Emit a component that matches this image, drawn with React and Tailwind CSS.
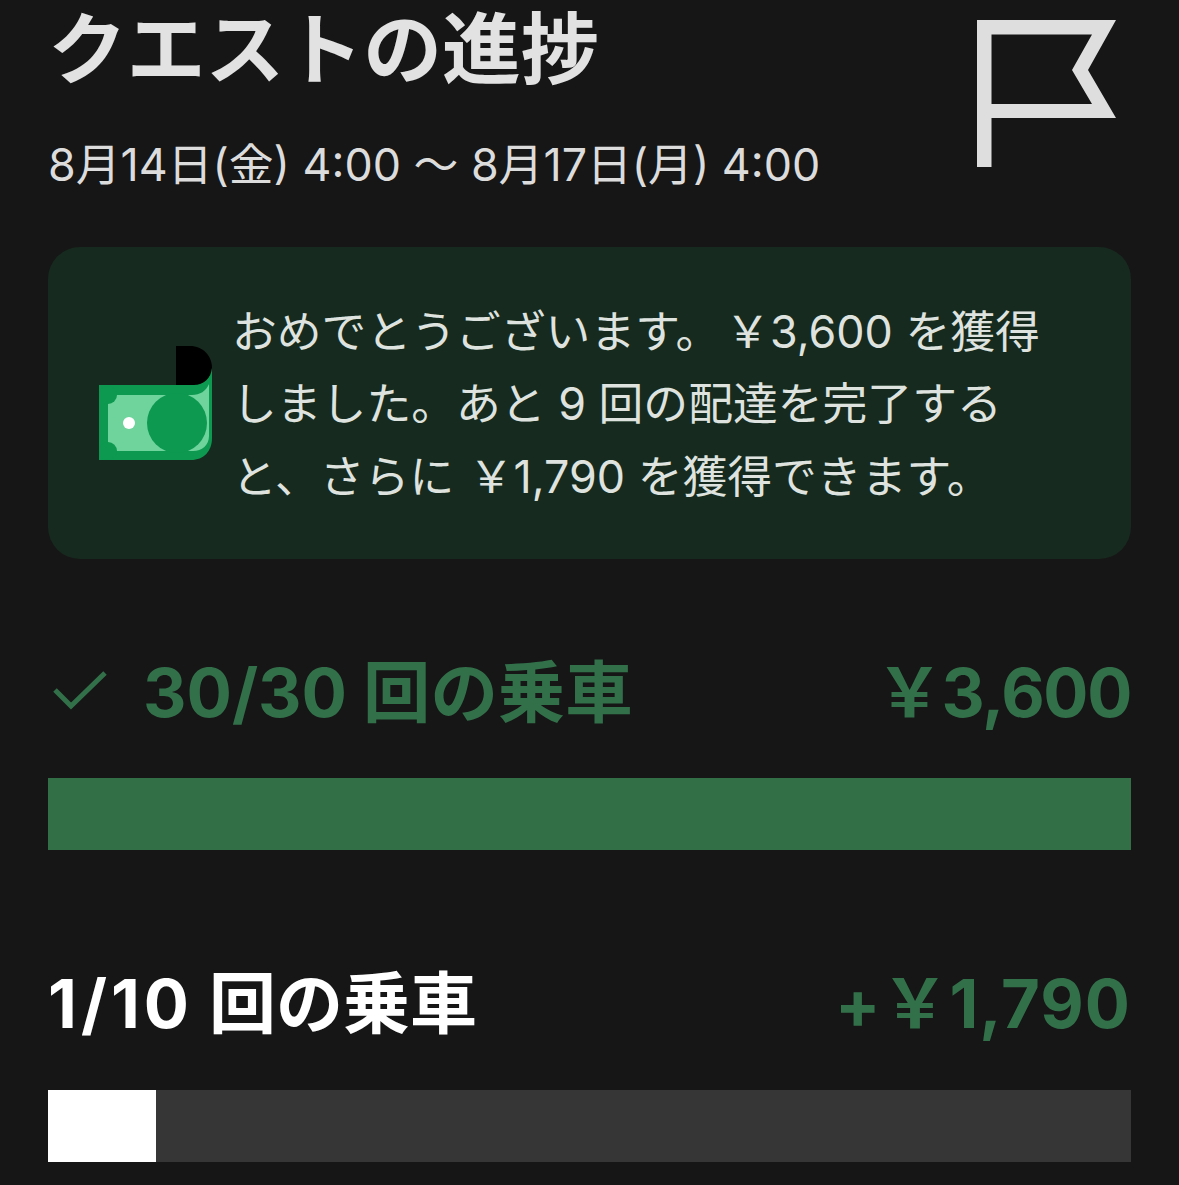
import React from 'react';

const font = { fontFamily: 'Inter, "Noto Sans CJK JP", sans-serif' };
const yen = '\uFFE5';

function FlagIcon() {
  return (
    <svg width="140" height="148" viewBox="0 0 140 148" className="block">
      <path
        fillRule="evenodd"
        fill="#dedede"
        d="M0 0H139L111 50L139 98H14.500V147H0ZM14.500 14.500V84H115L95 50L115 14.500Z"
      />
    </svg>
  );
}

function MoneyIcon() {
  return (
    <svg width="114" height="116" viewBox="0 0 114 116" className="block">
      <path d="M77 0H91C104 0 113 10 113 22C113 31 106 39 95 39H77Z" fill="#000000" />
      <path d="M0 39H95C105 39 112 32 113 22V92C113 105 105 114 92 114H0Z" fill="#0d9950" />
      <path d="M9 49H93C101 49 107 45 110 38V90C110 99 103 105 94 105H9Z" fill="#6fd39c" />
      <circle cx="9" cy="49" r="9" fill="#0d9950" />
      <circle cx="9" cy="105" r="9" fill="#0d9950" />
      <circle cx="78" cy="77" r="30" fill="#0d9950" />
      <circle cx="30" cy="77" r="6" fill="#ffffff" />
    </svg>
  );
}

function App() {
  return (
    <div className="w-[1179px] h-[1185px] bg-[#161616] overflow-hidden px-[48px]" style={font}>
      <div className="flex items-start justify-between">
        <div>
          <h1 className="mt-[5px] text-[78.800px] leading-[90px] font-bold text-[#e2e2e2] whitespace-nowrap">
            クエストの進捗
          </h1>
          <p className="mt-[43px] text-[44.800px] leading-[54px] text-[#dcdcdc] whitespace-nowrap">
            8月14日(金) 4:00 〜 8月17日(月) 4:00
          </p>
        </div>
        <div className="mt-[20px] mr-[14px]">
          <FlagIcon />
        </div>
      </div>

      <div className="mt-[55px] h-[312px] rounded-[32px] bg-[#172a1f] flex items-center pl-[51px] pr-[80px]">
        <div className="shrink-0 mt-[2px]">
          <MoneyIcon />
        </div>
        <p className="ml-[19px] pt-[3px] text-[44.800px] leading-[72.500px] text-[#dfe3df] whitespace-nowrap">
          おめでとうございます。<span className="ml-[5px]">{yen}</span>3,600 を獲得<br />
          しました。あと 9 回の配達を完了する<br />
          と、さらに <span className="ml-[2px]">{yen}</span>1,790 を獲得できます。
        </p>
      </div>

      <div className="mt-[92px] flex items-center justify-between h-[84px]">
        <div className="flex items-center">
          <svg width="56" height="44" viewBox="0 0 56 44" className="block mr-[36px] ml-[5px] -mt-[4px]">
            <path d="M2 21L18 37L52 4" fill="none" stroke="#32704a" strokeWidth="5" />
          </svg>
          <span className="text-[67.400px] font-bold text-[#32704a] whitespace-nowrap -ml-[2px]">30/30 回の乗車</span>
        </div>
        <span className="text-[67px] font-bold text-[#32704a] whitespace-nowrap tracking-[-0.02em]">
          {yen}3,600
        </span>
      </div>
      <div className="mt-[43px] h-[72px] bg-[#326f47]" />

      <div className="mt-[112px] flex items-center justify-between h-[84px]">
        <span className="text-[67px] font-bold text-white whitespace-nowrap">
          <span className="tracking-[0.06em]">1/10</span> 回の乗車
        </span>
        <span className="text-[67px] font-bold text-[#32704a] whitespace-nowrap tracking-[1px]">
          +{yen}1,790
        </span>
      </div>
      <div className="mt-[44px] h-[72px] bg-[#363636]">
        <div className="h-full w-[108px] bg-white" />
      </div>
    </div>
  );
}

export default App;
